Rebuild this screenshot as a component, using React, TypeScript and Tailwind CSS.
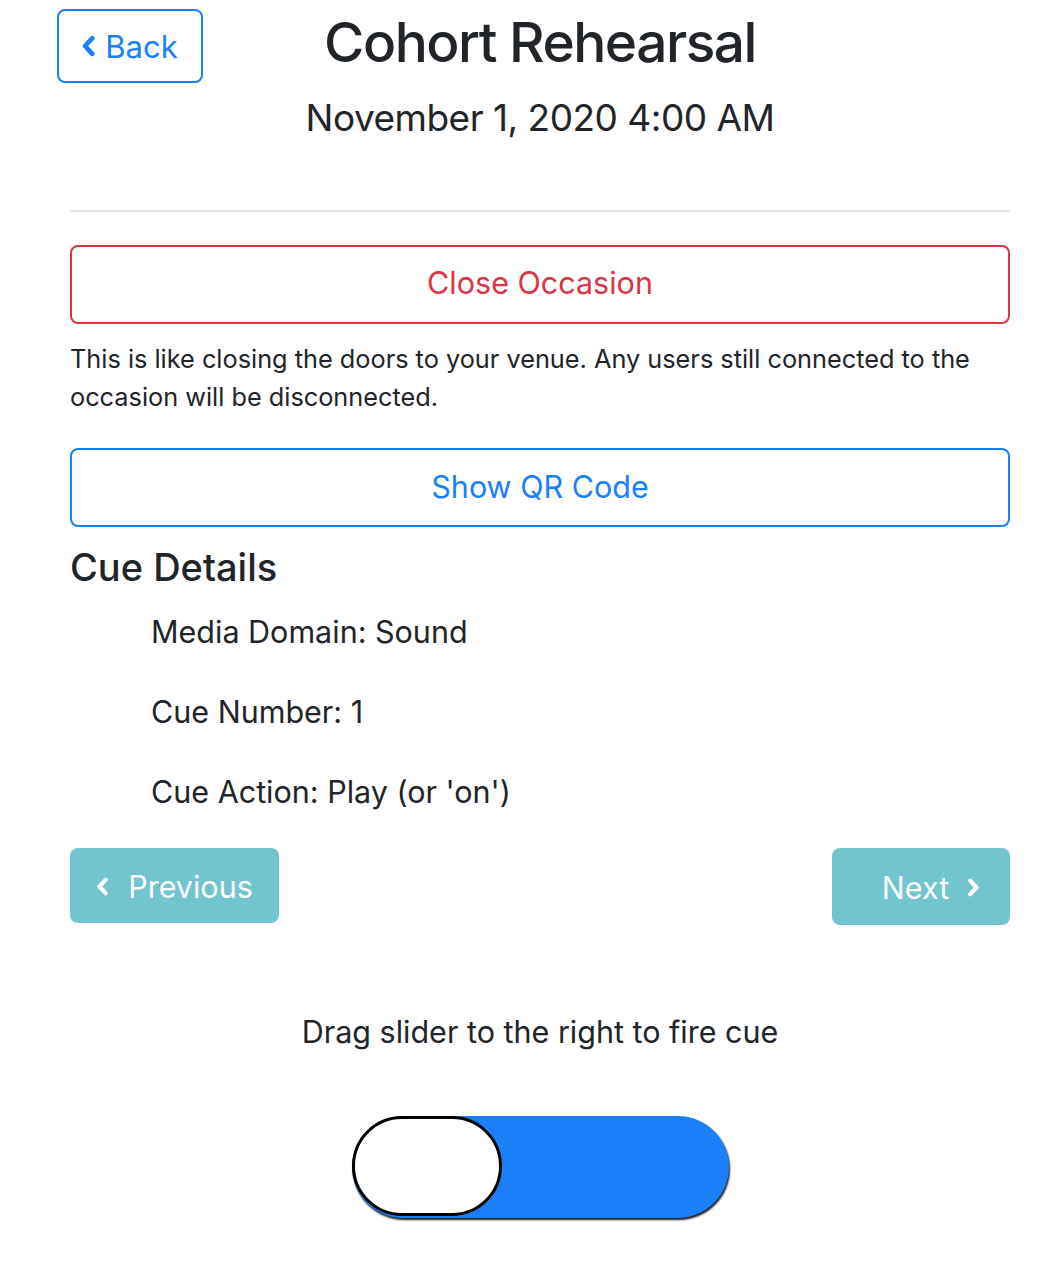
import React from "react";

function Chevron({ dir, className }: { dir: "left" | "right"; className?: string }) {
  return (
    <svg viewBox="0 0 12 20" className={className} fill="none" stroke="currentColor" strokeWidth={4.4} strokeLinecap="round" strokeLinejoin="round">
      {dir === "left" ? <polyline points="9.5,2.8 2.8,10 9.5,17.2" /> : <polyline points="2.5,2.8 9.2,10 2.5,17.2" />}
    </svg>
  );
}

export default function App() {
  return (
    <div
      className="relative w-[1062px] min-h-[1262px] bg-white text-[#212529]"
      style={{ fontFamily: "Inter, 'Noto Sans', sans-serif" }}
    >
      <button className="absolute left-[57px] top-[9px] flex h-[74px] w-[146px] items-center justify-center gap-[10px] rounded-[8px] border-2 border-[#1b7ffa] text-[31px] text-[#1b7ffa]">
        <Chevron dir="left" className="h-[22px] w-[13px]" />
        <span className="leading-none">Back</span>
      </button>

      <div className="ml-[70px] w-[940px]">
        <div className="flex flex-col items-center pt-[6px]">
          <h1 className="text-[55px] font-medium leading-[72px] tracking-[-1.5px]">Cohort Rehearsal</h1>
          <div className="mt-[16px] text-[37px] leading-[48px] tracking-[-0.5px]">November 1, 2020 4:00 AM</div>
        </div>

        <div className="mt-[68px] h-[2px] bg-[#e6e6e6]" />

        <button className="mt-[33px] flex h-[79px] w-full items-center justify-center rounded-[8px] border-2 border-[#dc3545] pb-[3px] text-[30.5px] text-[#dc3545]">
          Close Occasion
        </button>

        <p className="mt-[16px] text-[25.3px] leading-[38.4px]">
          This is like closing the doors to your venue. Any users still connected to the occasion will be disconnected.
        </p>

        <button className="mt-[31px] flex h-[79px] w-full items-center justify-center rounded-[8px] border-2 border-[#1b7ffa] text-[30.5px] text-[#1b7ffa]">
          Show QR Code
        </button>

        <h3 className="mt-[17px] text-[38px] font-medium leading-[46px]">Cue Details</h3>

        <div className="mt-[18px] flex flex-col gap-[32px] pl-[81px] text-[30.5px] leading-[48px]">
          <div>Media Domain: Sound</div>
          <div>Cue Number: 1</div>
          <div>Cue Action: Play (or 'on')</div>
        </div>

        <div className="mt-[32px] flex items-start justify-between">
          <button className="flex h-[75px] w-[209px] items-center justify-center gap-[19px] rounded-[8px] bg-[#72c4cf] pt-[3px] text-[30.5px] text-white">
            <Chevron dir="left" className="h-[19px] w-[13px]" />
            <span>Previous</span>
          </button>
          <button className="flex h-[77px] w-[178px] items-center justify-center gap-[18px] rounded-[8px] bg-[#72c4cf] pl-[20px] pt-[3px] text-[30.5px] text-white">
            <span>Next</span>
            <Chevron dir="right" className="h-[19px] w-[13px]" />
          </button>
        </div>

        <div className="mt-[83px] text-center text-[30.5px] leading-[48px]">Drag slider to the right to fire cue</div>

        <div className="mt-[60px] flex justify-center">
          <div className="relative h-[102px] w-[377px] rounded-full bg-[#1b7ffa] shadow-[1px_2px_2px_rgba(0,0,0,0.9)]">
            <div className="absolute left-0 top-0 h-[100px] w-[150px] rounded-full border-[3px] border-black bg-white" />
          </div>
        </div>
      </div>
    </div>
  );
}
